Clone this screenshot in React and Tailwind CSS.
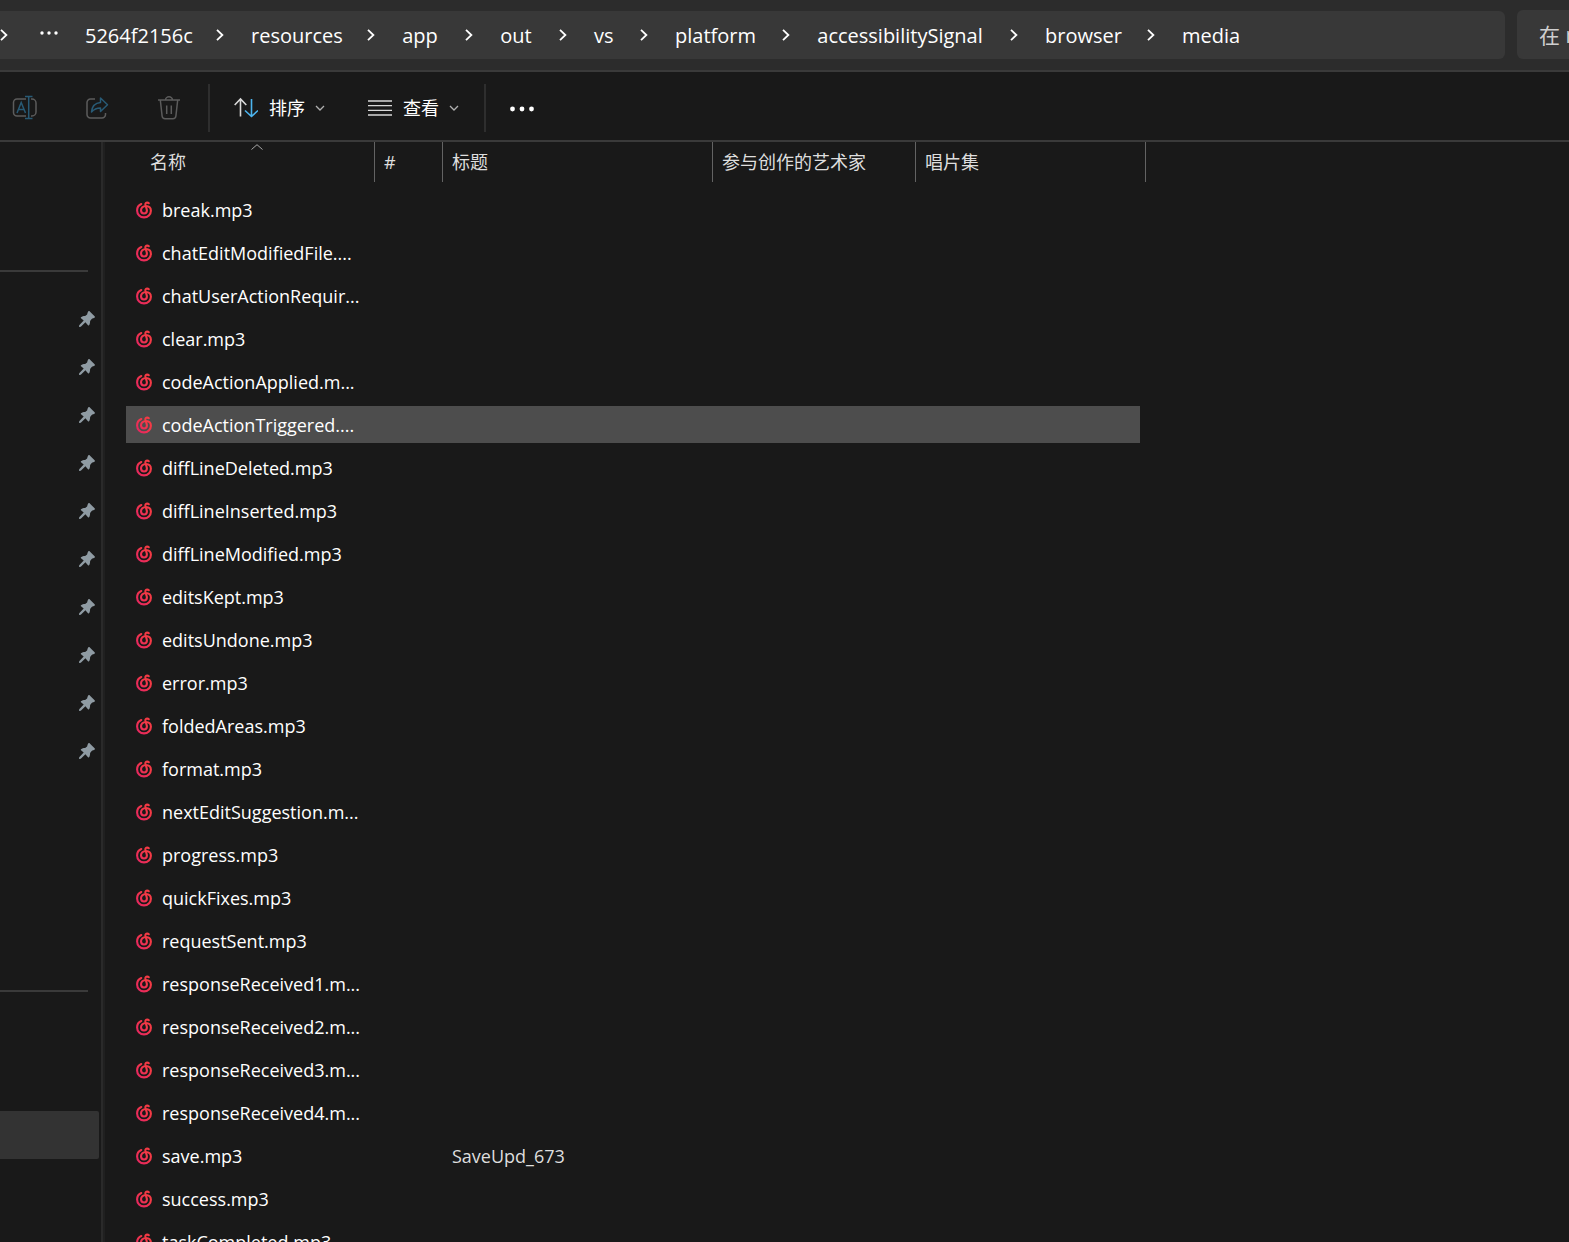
import React from 'react';

const crumbs = [
  { name: '5264f2156c', width: 'w-[104px]' },
  { name: 'resources', width: 'w-[89px]' },
  { name: 'app', width: 'w-[36px]' },
  { name: 'out', width: 'w-[32px]' },
  { name: 'vs', width: 'w-[19px]' },
  { name: 'platform', width: 'w-[80px]' },
  { name: 'accessibilitySignal', width: 'w-[166px]' },
  { name: 'browser', width: 'w-[75px]' },
  { name: 'media', width: 'w-[57px]' },
];

const files = [
  { name: 'break.mp3' },
  { name: 'chatEditModifiedFile....' },
  { name: 'chatUserActionRequir...' },
  { name: 'clear.mp3' },
  { name: 'codeActionApplied.m...' },
  { name: 'codeActionTriggered....', selected: true },
  { name: 'diffLineDeleted.mp3' },
  { name: 'diffLineInserted.mp3' },
  { name: 'diffLineModified.mp3' },
  { name: 'editsKept.mp3' },
  { name: 'editsUndone.mp3' },
  { name: 'error.mp3' },
  { name: 'foldedAreas.mp3' },
  { name: 'format.mp3' },
  { name: 'nextEditSuggestion.m...' },
  { name: 'progress.mp3' },
  { name: 'quickFixes.mp3' },
  { name: 'requestSent.mp3' },
  { name: 'responseReceived1.m...' },
  { name: 'responseReceived2.m...' },
  { name: 'responseReceived3.m...' },
  { name: 'responseReceived4.m...' },
  { name: 'save.mp3', title: 'SaveUpd_673' },
  { name: 'success.mp3' },
  { name: 'taskCompleted.mp3' },
];

const pins = [1, 2, 3, 4, 5, 6, 7, 8, 9, 10];

const Chevron = () => (
  <svg className="w-2 h-3 shrink-0" viewBox="0 0 8 12" fill="none" stroke="#fff" strokeWidth="1.8">
    <path d="M1 .8 6.4 6 1 11.2" />
  </svg>
);

const ChevronDown = () => (
  <svg className="w-[10px] h-[6px] shrink-0" viewBox="0 0 10 6" fill="none" stroke="#b0b0b0" strokeWidth="1.3">
    <path d="M1 1l4 4 4-4" />
  </svg>
);

const MusicIcon = () => (
  <svg className="w-[18px] h-[18px] shrink-0" viewBox="0 0 18 18" fill="none" stroke="url(#music)" strokeWidth="2.1" strokeLinecap="round">
    <path d="M6.300 3C3.600 4.100 2.100 6.400 2.100 9.500c0 4 3.100 6.900 6.900 6.900s6.900-2.900 6.900-6.600c0-3-1.800-4.800-4.900-4.800-3.100 0-5 1.900-5 4.300 0 1.900 1.300 3.200 3 3.200s2.900-1.300 2.900-3c0-.7-.2-1.200-.4-2L10.400 3.700c-.2-1.400.6-2.100 1.800-2.100.7 0 1.200.2 1.600.6" />
  </svg>
);

const PinIcon = () => (
  <svg className="w-4 h-4" viewBox="0 0 16 16" fill="#8f9ba3">
    <path d="M9.400.3c.5-.4 1-.3 1.400.1l4.800 4.800c.5.500.5 1 .1 1.400-.9.900-2 .8-3 1.300l-1.600 2c0 1.700-.2 3.200-1.100 4.300-.3.300-.7.300-1 0L6.400 11.300 1.800 15.700 0 16l.2-1.800 4.500-4.600L2 7.200c-.3-.3-.3-.7 0-1 1.100-.9 2.500-1.200 4.100-1.200l2-1.600c.5-1 .4-2.300 1.300-3.100z" />
  </svg>
);

const NavBar = () => (
  <header className="flex items-end h-[72px] pb-[11px] bg-[#2c2c2c] border-b-2 border-[#3a3a3a] overflow-hidden">
    <nav className="flex flex-1 items-center h-12 bg-[#383838] rounded-r-md text-white text-[20px] leading-6">
      <Chevron />
      <button aria-label="More folders" className="w-[18px] ml-8 mr-[27px]">
        <svg className="w-[18px] h-2 -mt-1" viewBox="0 0 18 8" fill="#fff">
          <circle cx="2" cy="4" r="1.700" />
          <circle cx="9" cy="4" r="1.700" />
          <circle cx="16" cy="4" r="1.700" />
        </svg>
      </button>
      {crumbs.map((crumb, i) => (
        <div key={crumb.name} className="flex items-center">
          {i > 0 && <div className="px-[27px]"><Chevron /></div>}
          <button className={`${crumb.width} pt-[2px] whitespace-nowrap`}>{crumb.name}</button>
        </div>
      ))}
    </nav>
    <input
      type="text"
      aria-label="搜索"
      placeholder="在 media 中搜索"
      className="w-[52px] h-[49px] ml-3 pl-[22px] bg-[#383838] rounded-l-md text-[21px] placeholder:text-[#cfcfcf]"
    />
  </header>
);

const Toolbar = () => (
  <div className="flex items-center h-[70px] pl-3 pt-1 border-b-2 border-[#3a3a3a] text-white text-[18px]">
    <button aria-label="重命名" className="w-[26px] mr-[47px]">
      <svg className="w-[26px] h-[26px]" viewBox="0 0 26 26" fill="none" strokeWidth="1.500">
        <path stroke="#5c5c5c" d="M14 4H5a3.500 3.500 0 0 0-3.500 3.500v10A3.500 3.500 0 0 0 5 21h9M19 4h1a4 4 0 0 1 4 4v9a4 4 0 0 1-4 4h-1" />
        <path stroke="#285a75" d="M5 18 9.200 7.500 13.500 18M6.500 14.500h5.500M16.700 1.500v22M13 1.500h7.500M13 23.500h7.500" />
      </svg>
    </button>
    <button aria-label="共享" className="w-6 mr-12">
      <svg className="w-6 h-6" viewBox="0 0 24 24" fill="none" strokeWidth="1.500" strokeLinejoin="round">
        <path stroke="#5c5c5c" d="M10 3H5.500A3.500 3.500 0 0 0 2 6.500v12A3.500 3.500 0 0 0 5.500 22h11.500a3.500 3.500 0 0 0 3.500-3.500V17" />
        <path stroke="#285a75" d="M15.500 2 22.500 8.800l-7 6.700V12c-4-.1-6.500 1.300-9 4 .5-5.500 3.500-9 9-9.500z" />
      </svg>
    </button>
    <button aria-label="删除" className="w-6 mr-[27px]">
      <svg className="w-6 h-6" viewBox="0 0 24 24" fill="none" stroke="#5c5c5c" strokeWidth="1.500">
        <path d="M1 4h22M8.500 4a3.500 3.200 0 0 1 7 0M3.300 4l1.800 16a3 3 0 0 0 3 2.700h7.800a3 3 0 0 0 3-2.700l1.800-16M9.700 9.500v8.500M14.300 9.500v8.500" />
      </svg>
    </button>
    <div className="w-[2px] h-12 mr-6 bg-[#2e2e2e]" />
    <button className="flex items-center mr-[43px]">
      <svg className="w-6 h-6 mr-[11px]" viewBox="0 0 24 24" fill="none" strokeWidth="1.600">
        <path stroke="#d8d8d8" d="M6.500 20.500V3M.7 9l5.800-6 5.800 6" />
        <path stroke="#4cb4ee" d="M17.500 3v17.500M11 14.500l6.500 6 6.500-6" />
      </svg>
      排序
      <span className="ml-[10px]"><ChevronDown /></span>
    </button>
    <button className="flex items-center mr-[25px]">
      <svg className="w-6 h-4 mr-[11px]" viewBox="0 0 24 16" stroke="#d8d8d8" strokeWidth="1.300">
        <path d="M0 1h24M0 5.700h24M0 10.300h24M0 15h24" />
      </svg>
      查看
      <span className="ml-[10px]"><ChevronDown /></span>
    </button>
    <div className="w-[2px] h-12 mr-6 bg-[#2e2e2e]" />
    <button aria-label="查看更多">
      <svg className="w-6 h-6" viewBox="0 0 24 24" fill="#fff">
        <circle cx="2.500" cy="13" r="2.400" />
        <circle cx="12" cy="13" r="2.400" />
        <circle cx="21.500" cy="13" r="2.400" />
      </svg>
    </button>
  </div>
);

const Sidebar = () => (
  <aside className="w-[101px] shrink-0 pt-32">
    <div className="w-[88px] h-[2px] mb-[23px] bg-[#3a3a3a]" />
    <ul>
      {pins.map((pin) => (
        <li key={pin} className="flex items-center justify-end h-12 pr-[6px]">
          <PinIcon />
        </li>
      ))}
    </ul>
    <div className="w-[88px] h-[2px] mt-[215px] bg-[#3a3a3a]" />
    <div className="w-[99px] h-12 mt-[119px] bg-[#333333] rounded-r-xs" />
  </aside>
);

const HeaderCell = ({ children, className = 'pl-[9px]' }) => (
  <th scope="col" className="p-0 pb-[6px] font-normal text-left">
    <div className={`relative flex items-center h-10 border-r border-[#636363] ${className}`}>{children}</div>
  </th>
);

const FileList = () => (
  <table className="table-fixed border-separate border-spacing-0 w-[1020px] ml-[21px] text-[18px] leading-6 text-[#dedede]">
    <colgroup>
      <col className="w-[249px]" />
      <col className="w-[68px]" />
      <col className="w-[270px]" />
      <col className="w-[203px]" />
      <col className="w-[230px]" />
    </colgroup>
    <thead>
      <tr>
        <HeaderCell className="pl-6">
          名称
          <svg className="absolute left-[125px] top-[2px] w-3 h-[6px]" viewBox="0 0 12 6" fill="none" stroke="#a8a8a8">
            <path d="M.5 5.500 6 .7l5.500 4.800" />
          </svg>
        </HeaderCell>
        <HeaderCell>#</HeaderCell>
        <HeaderCell>标题</HeaderCell>
        <HeaderCell>参与创作的艺术家</HeaderCell>
        <HeaderCell>唱片集</HeaderCell>
      </tr>
    </thead>
    <tbody>
      {files.map((file) => {
        const cell = `h-[43px] p-0 border-y-[3px] border-transparent bg-clip-padding ${file.selected ? 'bg-[#4d4d4d]' : ''}`;
        return (
          <tr key={file.name}>
            <td className={cell}>
              <div className="flex items-center gap-[9px] pl-[9px] text-white whitespace-nowrap">
                <MusicIcon />
                {file.name}
              </div>
            </td>
            <td className={cell}></td>
            <td className={cell}><div className="pl-[9px]">{file.title}</div></td>
            <td className={cell}></td>
            <td className={`${cell} border-r-[6px]`}></td>
          </tr>
        );
      })}
    </tbody>
  </table>
);

const App = () => {
  return (
    <div className="flex flex-col h-screen overflow-hidden bg-[#191919] font-['Open_Sans','Noto_Sans_CJK_SC',sans-serif]">
      {/* Shared gradient for the file icons */}
      <svg className="absolute w-0 h-0" aria-hidden="true">
        <defs>
          <linearGradient id="music" x1="1" y1="0" x2="0" y2="1">
            <stop offset="0.3" stopColor="#f53a45" />
            <stop offset="1" stopColor="#e42463" />
          </linearGradient>
        </defs>
      </svg>
      <NavBar />
      <Toolbar />
      <main className="flex flex-1 min-h-0 overflow-hidden">
        <Sidebar />
        <div className="w-1 shrink-0 bg-[#2a2a2a] border-r-2 border-[#202020]" />
        <FileList />
      </main>
    </div>
  );
};

export default App;
